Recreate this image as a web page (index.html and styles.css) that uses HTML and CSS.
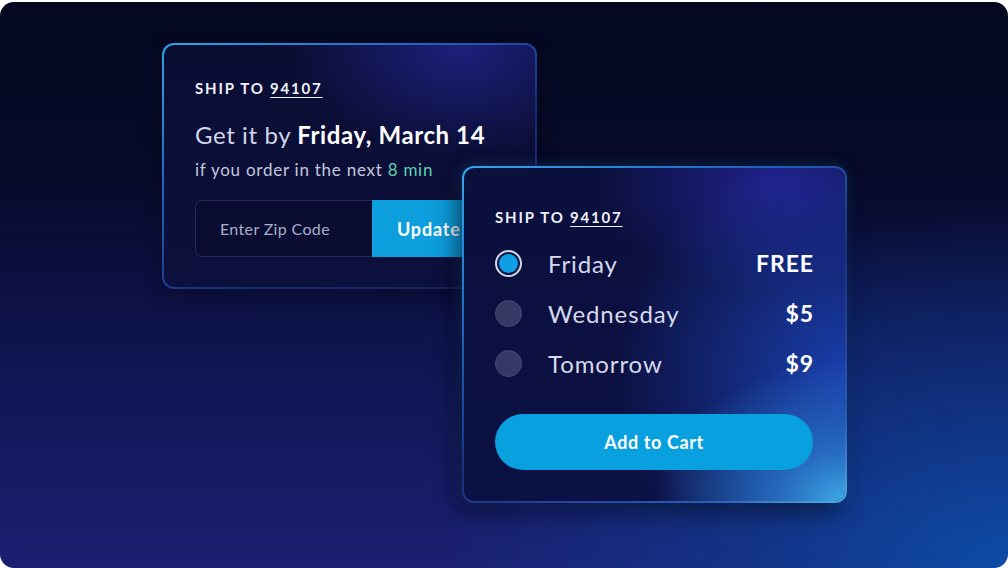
FILE: index.html
```html
<!DOCTYPE html>
<html>
<head>
<meta charset="utf-8">
<link rel="stylesheet" href="styles.css">
</head>
<body>
<div class="stage">
  <section class="card card-eta">
    <div class="ship">SHIP TO <span class="zip">94107</span></div>
    <h2 class="eta">Get it by <strong>Friday, March 14</strong></h2>
    <p class="sub">if you order in the next <span class="mins">8 min</span></p>
    <div class="zip-form">
      <div class="zip-input">Enter Zip Code</div>
      <div class="zip-btn">Update</div>
    </div>
  </section>

  <section class="card card-options">
    <div class="ship">SHIP TO <span class="zip">94107</span></div>
    <div class="options">
      <div class="option">
        <span class="radio selected"></span>
        <span class="day">Friday</span>
        <span class="price">FREE</span>
      </div>
      <div class="option">
        <span class="radio"></span>
        <span class="day">Wednesday</span>
        <span class="price">$5</span>
      </div>
      <div class="option">
        <span class="radio"></span>
        <span class="day">Tomorrow</span>
        <span class="price">$9</span>
      </div>
    </div>
    <div class="cart-btn">Add to Cart</div>
  </section>
</div>
</body>
</html>
```

FILE: styles.css
```css
* { box-sizing: border-box; }
html, body { margin: 0; padding: 0; background: #ffffff; }
body { font-family: "Lato", "Noto Sans", sans-serif; }

.stage {
  position: relative;
  margin-top: 2px;
  width: 1008px;
  height: 566px;
  border-radius: 14px;
  overflow: hidden;
  padding: 41px 0 0 162px;
  background:
    radial-gradient(ellipse 560px 360px at 100% 100%, rgba(12, 78, 168, 0.95) 0%, rgba(14, 64, 150, 0.6) 45%, rgba(14, 50, 130, 0) 100%),
    linear-gradient(180deg, #050820 0%, #070a29 30%, #0f1450 62%, #1b2073 100%);
}

.card {
  border: 2px solid transparent;
  border-radius: 12px;
  color: #d6d9ea;
}

.card-eta {
  width: 375px;
  height: 246px;
  padding: 34px 31px 0 31px;
  background:
    radial-gradient(ellipse 170px 110px at 80% 0%, rgba(36, 38, 150, 0.75) 0%, rgba(30, 32, 120, 0) 100%) padding-box,
    linear-gradient(180deg, #0a0d32 0%, #0c103c 100%) padding-box,
    linear-gradient(150deg, #2ea4ec 0%, #1f6ac2 30%, #1a2d78 60%, #161c52 100%) border-box;
  box-shadow: 0 6px 20px rgba(0, 0, 10, 0.35);
}

.ship {
  font-size: 15px;
  line-height: 18px;
  font-weight: 700;
  letter-spacing: 1.8px;
  color: #eef0f8;
}
.zip {
  text-decoration: underline;
  text-decoration-thickness: 1px;
  text-underline-offset: 3px;
}

.eta {
  margin: 24px 0 0 0;
  font-size: 24px;
  line-height: 28px;
  font-weight: 400;
  letter-spacing: 0.6px;
  color: #d3d6e8;
}
.eta strong { font-weight: 700; color: #ffffff; }

.sub {
  margin: 10px 0 0 0;
  font-size: 17px;
  line-height: 22px;
  letter-spacing: 0.75px;
  color: #c3c7dc;
}
.mins { color: #5fd0b0; }

.zip-form {
  margin-top: 19px;
  display: flex;
  height: 57px;
  width: 400px;
}
.zip-input {
  width: 177px;
  border: 1px solid #252a58;
  border-right: none;
  border-radius: 7px 0 0 7px;
  background: #090c30;
  color: #a9aec8;
  font-size: 16px;
  letter-spacing: 0.35px;
  display: flex;
  align-items: center;
  padding-left: 24px;
}
.zip-btn {
  flex: 1;
  background: #0d9edd;
  color: #ffffff;
  font-weight: 700;
  font-size: 18px;
  letter-spacing: 0.8px;
  display: flex;
  align-items: center;
  padding-left: 25px;
}

.card-options {
  position: absolute;
  left: 462px;
  top: 164px;
  width: 385px;
  height: 337px;
  padding: 40px 32px 0 31px;
  display: flex;
  flex-direction: column;
  background:
    radial-gradient(ellipse 190px 140px at 100% 100%, rgba(62, 168, 228, 1) 0%, rgba(44, 128, 214, 0.75) 35%, rgba(30, 80, 190, 0) 100%) padding-box,
    radial-gradient(ellipse 230px 230px at 100% 62%, rgba(28, 70, 190, 0.85) 0%, rgba(24, 50, 160, 0) 100%) padding-box,
    radial-gradient(ellipse 180px 110px at 82% 4%, rgba(40, 40, 170, 0.7) 0%, rgba(36, 36, 150, 0) 100%) padding-box,
    linear-gradient(180deg, #0b0f3c 0%, #0c1145 100%) padding-box,
    linear-gradient(150deg, #35a8ee 0%, #1f6fc8 25%, #1b2f82 55%, #2a5ab8 85%, #4fb0e8 100%) border-box;
  box-shadow: -6px 8px 22px rgba(0, 0, 12, 0.55), -2px 0 14px rgba(40, 150, 230, 0.25);
}

.options {
  margin-top: 12px;
  display: flex;
  flex-direction: column;
}
.option {
  height: 50px;
  display: flex;
  align-items: center;
}
.radio {
  width: 27px;
  height: 27px;
  border-radius: 50%;
  background: #353a65;
  border: 1.5px solid #474c7a;
  flex: none;
}
.radio.selected {
  background: #109fe2;
  border: 2px solid #d2d5e2;
  box-shadow: inset 0 0 0 2px #0b1242;
}
.day {
  margin-left: 26px;
  font-size: 24px;
  letter-spacing: 0.9px;
  color: #d6d9ea;
  flex: 1;
}
.price {
  font-size: 23px;
  font-weight: 700;
  letter-spacing: 0.9px;
  margin-right: -0.9px;
  color: #ffffff;
}

.cart-btn {
  margin-top: 26px;
  height: 56px;
  border-radius: 28px;
  background: #08a0df;
  color: #ffffff;
  font-weight: 700;
  font-size: 18px;
  letter-spacing: 0.6px;
  display: flex;
  align-items: center;
  justify-content: center;
}
```
